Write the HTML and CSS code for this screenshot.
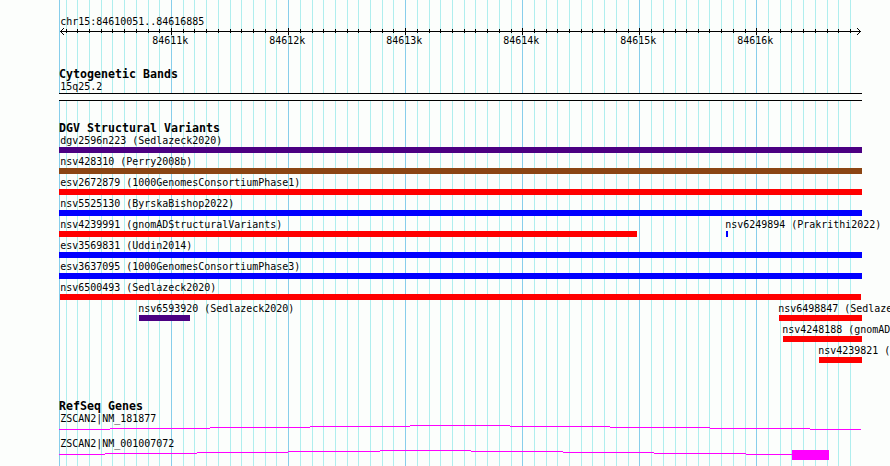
FILE: index.html
```
<!DOCTYPE html>
<html lang="en">
<head>
<meta charset="utf-8">
<title>chr15:84610051..84616885</title>
<link rel="stylesheet" href="styles.css">
</head>
<body>
<main class="browser">
  <svg class="grid" width="890" height="466" shape-rendering="crispEdges" aria-hidden="true">
    <path class="grid-minor" d="M66.5 0v466M77.5 0v466M89.5 0v466M101.5 0v466M112.5 0v466M124.5 0v466M136.5 0v466M148.5 0v466M159.5 0v466M183.5 0v466M194.5 0v466M206.5 0v466M218.5 0v466M230.5 0v466M241.5 0v466M253.5 0v466M265.5 0v466M276.5 0v466M300.5 0v466M312.5 0v466M323.5 0v466M335.5 0v466M347.5 0v466M358.5 0v466M370.5 0v466M382.5 0v466M393.5 0v466M417.5 0v466M429.5 0v466M440.5 0v466M452.5 0v466M464.5 0v466M475.5 0v466M487.5 0v466M499.5 0v466M511.5 0v466M534.5 0v466M546.5 0v466M557.5 0v466M569.5 0v466M581.5 0v466M592.5 0v466M604.5 0v466M616.5 0v466M628.5 0v466M651.5 0v466M663.5 0v466M675.5 0v466M686.5 0v466M698.5 0v466M709.5 0v466M721.5 0v466M733.5 0v466M745.5 0v466M768.5 0v466M780.5 0v466M791.5 0v466M803.5 0v466M815.5 0v466M827.5 0v466M838.5 0v466M850.5 0v466"/>
    <path class="grid-major" d="M59.5 0v466M171.5 0v466M288.5 0v466M405.5 0v466M522.5 0v466M639.5 0v466M756.5 0v466"/>
  </svg>

  <header class="ruler">
    <div class="label region">chr15:84610051..84616885</div>
    <svg class="axis" width="803" height="8" viewBox="59 28 803 8" shape-rendering="crispEdges" aria-hidden="true">
      <path d="M60 31.5H861M171.5 28v7M288.5 28v7M405.5 28v7M522.5 28v7M639.5 28v7M756.5 28v7"/>
      <path d="M66.5 29v4M77.5 29v4M89.5 29v4M101.5 29v4M112.5 29v4M124.5 29v4M136.5 29v4M148.5 29v4M159.5 29v4M183.5 29v4M194.5 29v4M206.5 29v4M218.5 29v4M230.5 29v4M241.5 29v4M253.5 29v4M265.5 29v4M276.5 29v4M300.5 29v4M312.5 29v4M323.5 29v4M335.5 29v4M347.5 29v4M358.5 29v4M370.5 29v4M382.5 29v4M393.5 29v4M417.5 29v4M429.5 29v4M440.5 29v4M452.5 29v4M464.5 29v4M475.5 29v4M487.5 29v4M499.5 29v4M511.5 29v4M534.5 29v4M546.5 29v4M557.5 29v4M569.5 29v4M581.5 29v4M592.5 29v4M604.5 29v4M616.5 29v4M628.5 29v4M651.5 29v4M663.5 29v4M675.5 29v4M686.5 29v4M698.5 29v4M709.5 29v4M721.5 29v4M733.5 29v4M745.5 29v4M768.5 29v4M780.5 29v4M791.5 29v4M803.5 29v4M815.5 29v4M827.5 29v4M838.5 29v4M850.5 29v4"/>
      <path d="M61 30.5h1M62 29.5h1M63 28.5h1M61 32.5h1M62 33.5h1M63 34.5h1M859 30.5h1M858 29.5h1M857 28.5h1M859 32.5h1M858 33.5h1M857 34.5h1"/>
    </svg>
    <div class="ticks">
      <span class="tick"><span class="label">84611k</span></span>
      <span class="tick"><span class="label">84612k</span></span>
      <span class="tick"><span class="label">84613k</span></span>
      <span class="tick"><span class="label">84614k</span></span>
      <span class="tick"><span class="label">84615k</span></span>
      <span class="tick"><span class="label">84616k</span></span>
    </div>
  </header>

  <section class="track cytobands">
    <h2>Cytogenetic Bands</h2>
    <div class="label">15q25.2</div>
    <div class="band"></div>
  </section>

  <section class="track variants">
    <h2>DGV Structural Variants</h2>
    <div class="row"><div class="label">dgv2596n223 (Sedlazeck2020)</div><div class="bar indigo"></div></div>
    <div class="row"><div class="label">nsv428310 (Perry2008b)</div><div class="bar brown"></div></div>
    <div class="row"><div class="label">esv2672879 (1000GenomesConsortiumPhase1)</div><div class="bar red"></div></div>
    <div class="row"><div class="label">nsv5525130 (ByrskaBishop2022)</div><div class="bar blue"></div></div>
    <div class="row pair">
      <div class="feature" style="width:666px"><div class="label">nsv4239991 (gnomADStructuralVariants)</div><div class="bar red" style="width:578px"></div></div>
      <div class="feature"><div class="label flush">nsv6249894 (Prakrithi2022)</div><div class="bar blue offset" style="width:2px"></div></div>
    </div>
    <div class="row"><div class="label">esv3569831 (Uddin2014)</div><div class="bar blue"></div></div>
    <div class="row"><div class="label">esv3637095 (1000GenomesConsortiumPhase3)</div><div class="bar blue"></div></div>
    <div class="row"><div class="label">nsv6500493 (Sedlazeck2020)</div><div class="bar red offset" style="width:801px"></div></div>
    <div class="row pair">
      <div class="feature" style="margin-left:79px;width:640px"><div class="label flush">nsv6593920 (Sedlazeck2020)</div><div class="bar indigo offset" style="width:51px"></div></div>
      <div class="feature"><div class="label flush">nsv6498847 (Sedlazeck2020)</div><div class="bar red offset" style="width:83px"></div></div>
    </div>
    <div class="row" style="padding-left:723px"><div class="label flush">nsv4248188 (gnomADStructuralVariants)</div><div class="bar red offset" style="width:79px"></div></div>
    <div class="row" style="padding-left:759px"><div class="label flush">nsv4239821 (gnomADStructuralVariants)</div><div class="bar red offset" style="width:43px"></div></div>
  </section>

  <section class="track genes">
    <h2>RefSeq Genes</h2>
    <div class="gene">
      <div class="label">ZSCAN2|NM_181877</div>
      <svg class="model" width="803" height="12" viewBox="59 425 803 12" shape-rendering="crispEdges" aria-hidden="true">
        <path d="M59 429.5H110M110 428.5H210M210 427.5H310M310 426.5H410M410 425.5H510M510 426.5H610M610 427.5H710M710 428.5H810M810 429.5H861"/>
      </svg>
    </div>
    <div class="gene">
      <div class="label">ZSCAN2|NM_001007072</div>
      <svg class="model" width="803" height="12" viewBox="59 450 803 12" shape-rendering="crispEdges" aria-hidden="true">
        <path d="M59 454.5H105M105 453.5H197M197 452.5H288M288 451.5H380M380 450.5H471M471 451.5H563M563 452.5H654M654 453.5H746M746 454.5H792"/>
        <rect x="792" y="450" width="37" height="10"/>
      </svg>
    </div>
  </section>
</main>
</body>
</html>
```
FILE: styles.css
```
* { box-sizing: border-box; }

body {
  margin: 0;
  background: #fcfefc;
  color: #000;
  font-family: "DejaVu Sans Mono", monospace;
}

.browser {
  position: relative;
  width: 890px;
  height: 466px;
  padding-left: 59px;
  overflow: hidden;
}

.grid {
  position: absolute;
  left: 0;
  top: 0;
  z-index: -1;
}
.grid path { fill: none; stroke-width: 1; }
.grid .grid-minor { stroke: #afeeee; }
.grid .grid-major { stroke: #87ceeb; }

.label {
  height: 13px;
  padding-left: 1.4px;
  font-size: 11px;
  line-height: 13px;
  white-space: nowrap;
  width: max-content;
  transform: scaleX(0.906);
  transform-origin: 0 0;
}
.label.flush { padding-left: 0.3px; }

h2 {
  margin: 0;
  height: 13px;
  font-size: 11.6px;
  font-weight: bold;
  line-height: 14px;
  letter-spacing: 0.016px;
  white-space: nowrap;
}

.ruler { height: 67px; padding-top: 15px; }
.axis { display: block; }
.axis path { stroke: #000; fill: none; }
.ticks {
  display: flex;
  padding-left: 92px;
  margin-top: -2px;
}
.tick { flex: 0 0 117px; }
.tick .label { display: block; }

.cytobands { height: 54px; }
.band {
  width: 803px;
  height: 8px;
  border: solid #000;
  border-width: 1px 0;
  background: #fcfefc;
}

.variants { height: 278px; }
.row { height: 21px; }
.pair { display: flex; }
.feature { flex: none; }
.bar { width: 803px; height: 6px; }
.offset { margin-left: 1px; }
.indigo { background: #4b0082; }
.brown { background: #8b4513; }
.red { background: #f00; }
.blue { background: #00f; }

.gene { height: 25px; }
.model { display: block; }
.model path { fill: none; stroke: #f0f; }
.model rect { fill: #f0f; }
```
